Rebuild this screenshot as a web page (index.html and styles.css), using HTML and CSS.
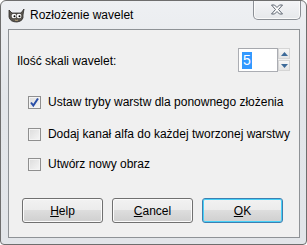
FILE: index.html
```html
<!DOCTYPE html>
<html lang="pl">
<head>
  <meta charset="UTF-8" />
  <title>Rozłożenie wavelet</title>
  <link rel="stylesheet" href="styles.css">
</head>
<body>
  <div class="wd-window">
    <!-- Title bar -->
    <div class="wd-titlebar">
      <svg class="wd-icon" width="17" height="15" viewBox="0 0 17 15">
        <path d="M1 2 L4 5 L13 5 L16 1 L15 7 Q16 13 9 14 Q2 14 1 9 Z" fill="#5a5650" stroke="#2e2c29" stroke-width="0.8"/>
        <ellipse cx="6" cy="8" rx="2.4" ry="2.2" fill="#fff"/>
        <ellipse cx="11" cy="8" rx="2.4" ry="2.2" fill="#fff"/>
        <circle cx="6.5" cy="8.3" r="1" fill="#000"/>
        <circle cx="11.5" cy="8.3" r="1" fill="#000"/>
        <path d="M7 12 Q8.5 13 10 12" stroke="#bfa77a" stroke-width="1" fill="none"/>
      </svg>
      <span class="wd-title">Rozłożenie wavelet</span>
      <div class="wd-close">
        <svg width="14" height="11" viewBox="0 0 14 11">
          <path d="M1.5 1 L4.5 1 L7 3.5 L9.5 1 L12.5 1 L8.5 5.5 L12.5 10 L9.5 10 L7 7.5 L4.5 10 L1.5 10 L5.5 5.5 Z" fill="#fdfdfd" stroke="#5c6470" stroke-width="1"/>
        </svg>
      </div>
    </div>

    <!-- Client area -->
    <div class="wd-client">
      <div class="wd-spin-row">
        <span class="wd-label">Ilość skali wavelet:</span>
        <div class="wd-spin">
          <div class="wd-spin-input"><span class="wd-sel">5</span></div>
          <div class="wd-spin-btns">
            <div class="wd-spin-btn">
              <svg width="7" height="4" viewBox="0 0 7 4"><path d="M0 4 L3.5 0 L7 4 Z" fill="#3d6a99"/></svg>
            </div>
            <div class="wd-spin-btn">
              <svg width="7" height="4" viewBox="0 0 7 4"><path d="M0 0 L3.5 4 L7 0 Z" fill="#3d6a99"/></svg>
            </div>
          </div>
        </div>
      </div>

      <div class="wd-check-row wd-first">
        <span class="wd-box">
          <svg width="11" height="11" viewBox="0 0 11 11"><path d="M2 5.5 L4.3 8.5 L9 1.5" stroke="#2a4fa8" stroke-width="2" fill="none"/></svg>
        </span>
        <span class="wd-check-text">Ustaw tryby warstw dla ponownego złożenia</span>
      </div>
      <div class="wd-check-row wd-second">
        <span class="wd-box"></span>
        <span class="wd-check-text">Dodaj kanał alfa do każdej tworzonej warstwy</span>
      </div>
      <div class="wd-check-row wd-third">
        <span class="wd-box"></span>
        <span class="wd-check-text">Utwórz nowy obraz</span>
      </div>

      <div class="wd-buttons">
        <div class="wd-btn"><u>H</u>elp</div>
        <div class="wd-btn"><u>C</u>ancel</div>
        <div class="wd-btn wd-default"><u>O</u>K</div>
      </div>
    </div>
  </div>
</body>
</html>
```

FILE: styles.css
```css
/* Base */
body {
  margin: 0;
  padding: 0;
  background: #ffffff;
  font-family: "Liberation Sans", Arial, sans-serif;
  font-size: 12px;
  color: #000;
  white-space: nowrap;
}

.wd-window {
  width: 307px;
  height: 245px;
  box-sizing: border-box;
  border: 1px solid #6e6e6e;
  border-radius: 6px 6px 4px 4px;
  background: linear-gradient(#eef0f3, #e3e6ea 40%, #e2e5e9);
  display: flex;
  flex-direction: column;
  overflow: hidden;
}

/* Title bar */
.wd-titlebar {
  height: 28px;
  display: flex;
  align-items: flex-start;
  padding-left: 7px;
}

.wd-icon {
  margin-top: 7px;
}

.wd-title {
  margin-left: 5px;
  margin-top: 7px;
  font-size: 12px;
  color: #000;
}

.wd-close {
  margin-left: auto;
  margin-right: 5px;
  margin-top: -1px;
  width: 46px;
  height: 19px;
  border: 1px solid #8b8f95;
  border-top: none;
  border-radius: 0 0 5px 5px;
  background: linear-gradient(#f4f5f7, #e6e8eb);
  display: flex;
  align-items: center;
  justify-content: center;
  box-shadow: inset 0 0 0 1px #fafafa;
}

/* Client area */
.wd-client {
  flex: 1;
  margin: 0 6px 6px 7px;
  border: 1px solid #8e9296;
  background: #f0f0f0;
  padding: 18px 9px 0 8px;
  display: flex;
  flex-direction: column;
}

.wd-spin-row {
  display: flex;
  align-items: center;
  height: 24px;
}

.wd-label {
  flex: 1;
  margin-top: 1px;
}

.wd-spin {
  display: flex;
  align-items: flex-start;
}

.wd-spin-input {
  height: 22px;
  border: 1px solid #abadb3;
  border-top-color: #a6a8ad;
  background: #fff;
  display: flex;
  align-items: center;
  padding-left: 3px;
  width: 35px;
}

.wd-sel {
  background: #3399ff;
  color: #fff;
  font-size: 14px;
  line-height: 17px;
  padding: 0 1px;
}

.wd-spin-btns {
  display: flex;
  flex-direction: column;
  gap: 1px;
}

.wd-spin-btn {
  width: 10px;
  height: 9px;
  border: 1px solid #d5d5d5;
  background: linear-gradient(#f7f7f7, #e4e4e4);
  display: flex;
  align-items: center;
  justify-content: center;
}

/* Check rows */
.wd-check-row {
  display: flex;
  align-items: center;
  height: 20px;
  padding-left: 11px;
}

.wd-first {
  margin-top: 20px;
}

.wd-second {
  margin-top: 12px;
}

.wd-third {
  margin-top: 10px;
}

.wd-box {
  width: 11px;
  height: 11px;
  border: 1px solid #8f8f8f;
  background: linear-gradient(135deg, #dcdcdc, #f6f6f6);
  box-shadow: inset 0 0 0 1px #f4f4f4;
  display: flex;
  align-items: center;
  justify-content: center;
}

.wd-check-text {
  margin-left: 7px;
}

/* Buttons */
.wd-buttons {
  display: flex;
  gap: 9px;
  margin-top: 24px;
  padding-left: 5px;
}

.wd-btn {
  width: 79px;
  height: 23px;
  border: 1px solid #707070;
  border-radius: 3px;
  background: linear-gradient(#f2f2f2, #ebebeb 50%, #dddddd 50%, #cfcfcf);
  box-shadow: inset 0 0 0 1px #fbfbfb;
  display: flex;
  align-items: center;
  justify-content: center;
}

.wd-default {
  border-color: #3c7fb1;
  box-shadow: inset 0 0 0 1px #48d1f8;
}
```
